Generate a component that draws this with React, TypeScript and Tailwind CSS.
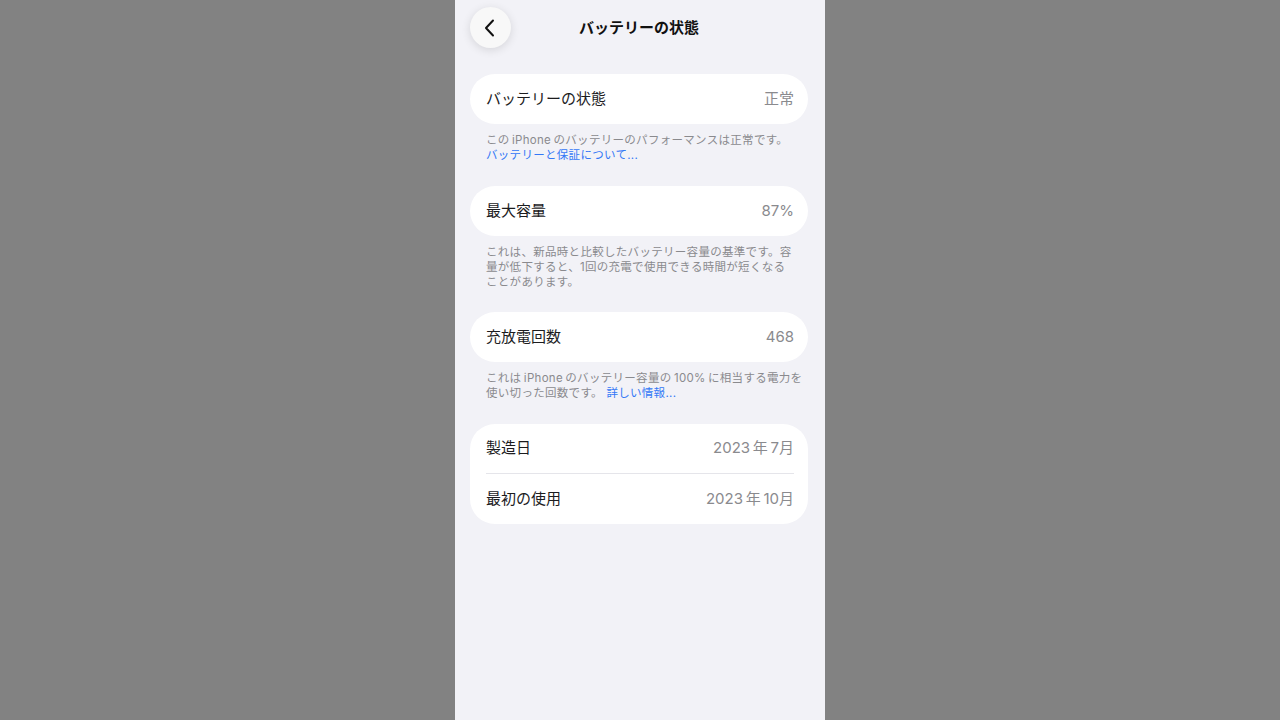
const font = {
  fontFamily: '"Inter", "Noto Sans CJK JP", sans-serif',
};

function Row({ label, value, h = "h-[50px]" }: { label: string; value: string; h?: string }) {
  return (
    <div className={`flex ${h} items-center justify-between`}>
      <span className="text-[15px] text-[#1c1c1e]">{label}</span>
      <span className="text-[15px] text-[#8a8a8e]">{value}</span>
    </div>
  );
}

function Card({ children }: { children: React.ReactNode }) {
  return <div className="rounded-[25px] bg-white pl-[16px] pr-[14px]">{children}</div>;
}

function Note({ children }: { children: React.ReactNode }) {
  return (
    <p className="whitespace-nowrap px-[16px] pt-[9px] text-[11.5px] leading-[15px] tracking-[0.3px] text-[#8a8a8e]">
      {children}
    </p>
  );
}

export default function App() {
  return (
    <div className="flex h-[720px] w-full justify-center bg-[#828282]" style={font}>
      <div className="flex h-full w-[370px] flex-col bg-[#f2f2f7] pl-[15px] pr-[17px]">
        <div className="relative flex h-[56px] items-center justify-center">
          <button className="absolute left-0 top-[7px] flex h-[41px] w-[41px] items-center justify-center rounded-full bg-[#f8f8f8] shadow-[0_2px_10px_rgba(0,0,0,0.12)]">
            <svg width="14" height="18" viewBox="0 0 14 18" fill="none">
              <path
                d="M9 1.5 L2 9 L9 16.5"
                stroke="#111"
                strokeWidth="2"
                strokeLinecap="round"
                strokeLinejoin="round"
              />
            </svg>
          </button>
          <h1 className="text-[15px] font-semibold text-[#111]">バッテリーの状態</h1>
        </div>

        <div className="mt-[18px]">
          <Card>
            <Row label="バッテリーの状態" value="正常" />
          </Card>
          <Note>
            この{"\u2009"}iPhone{"\u2009"}のバッテリーのパフォーマンスは正常です。
            <br />
            <span className="text-[#3478f6]">バッテリーと保証について...</span>
          </Note>
        </div>

        <div className="mt-[23px]">
          <Card>
            <Row label="最大容量" value="87%" />
          </Card>
          <Note>
            これは、新品時と比較したバッテリー容量の基準です。容
            <br />
            量が低下すると、1回の充電で使用できる時間が短くなる
            <br />
            ことがあります。
          </Note>
        </div>

        <div className="mt-[22px]">
          <Card>
            <Row label="充放電回数" value="468" />
          </Card>
          <Note>
            これは{"\u2009"}iPhone{"\u2009"}のバッテリー容量の{"\u2009"}100%{"\u2009"}に相当する電力を
            <br />
            使い切った回数です。{" "}
            <span className="text-[#3478f6]">詳しい情報...</span>
          </Note>
        </div>

        <div className="mt-[23px]">
          <Card>
            <div className="border-b border-[#e5e5ea]">
              <Row label="製造日" value={"2023\u2009年\u20097月"} h="h-[49px]" />
            </div>
            <Row label="最初の使用" value={"2023\u2009年\u200910月"} />
          </Card>
        </div>
      </div>
    </div>
  );
}
